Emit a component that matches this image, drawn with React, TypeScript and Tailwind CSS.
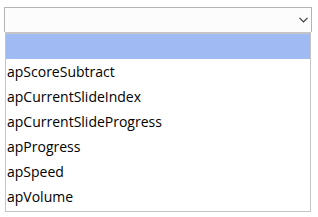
const options = [
  "",
  "apScoreSubtract",
  "apCurrentSlideIndex",
  "apCurrentSlideProgress",
  "apProgress",
  "apSpeed",
  "apVolume",
];

function Chevron() {
  return (
    <svg width="9" height="6" viewBox="0 0 9 6" className="block">
      <path d="M0.5 0.8 L4.5 4.8 L8.5 0.8" fill="none" stroke="#3a3a3a" strokeWidth="1.2" />
    </svg>
  );
}

export default function App() {
  return (
    <div
      className="h-[217px] w-[318px] bg-white pl-[4px] pt-[7px]"
      style={{ fontFamily: '"Open Sans", "Noto Sans", sans-serif' }}
    >
      <div className="flex h-[25px] w-[308px] items-center justify-end border border-b-0 border-[#b4b4b4] bg-[#fcfcfc] pr-[3px]">
        <Chevron />
      </div>
      <div className="ml-[1px] w-[306px] border border-t-2 border-[#c4c4c4] bg-white pb-[2px]">
        {options.map((o, i) => (
          <div
            key={i}
            className={
              i === 0
                ? "flex h-[25px] items-center bg-[#a0bbf3] pl-[1px] text-[14px] text-black"
                : "flex h-[25px] items-center pl-[1px] text-[14px] leading-none text-black"
            }
          >
            {o}
          </div>
        ))}
      </div>
    </div>
  );
}
